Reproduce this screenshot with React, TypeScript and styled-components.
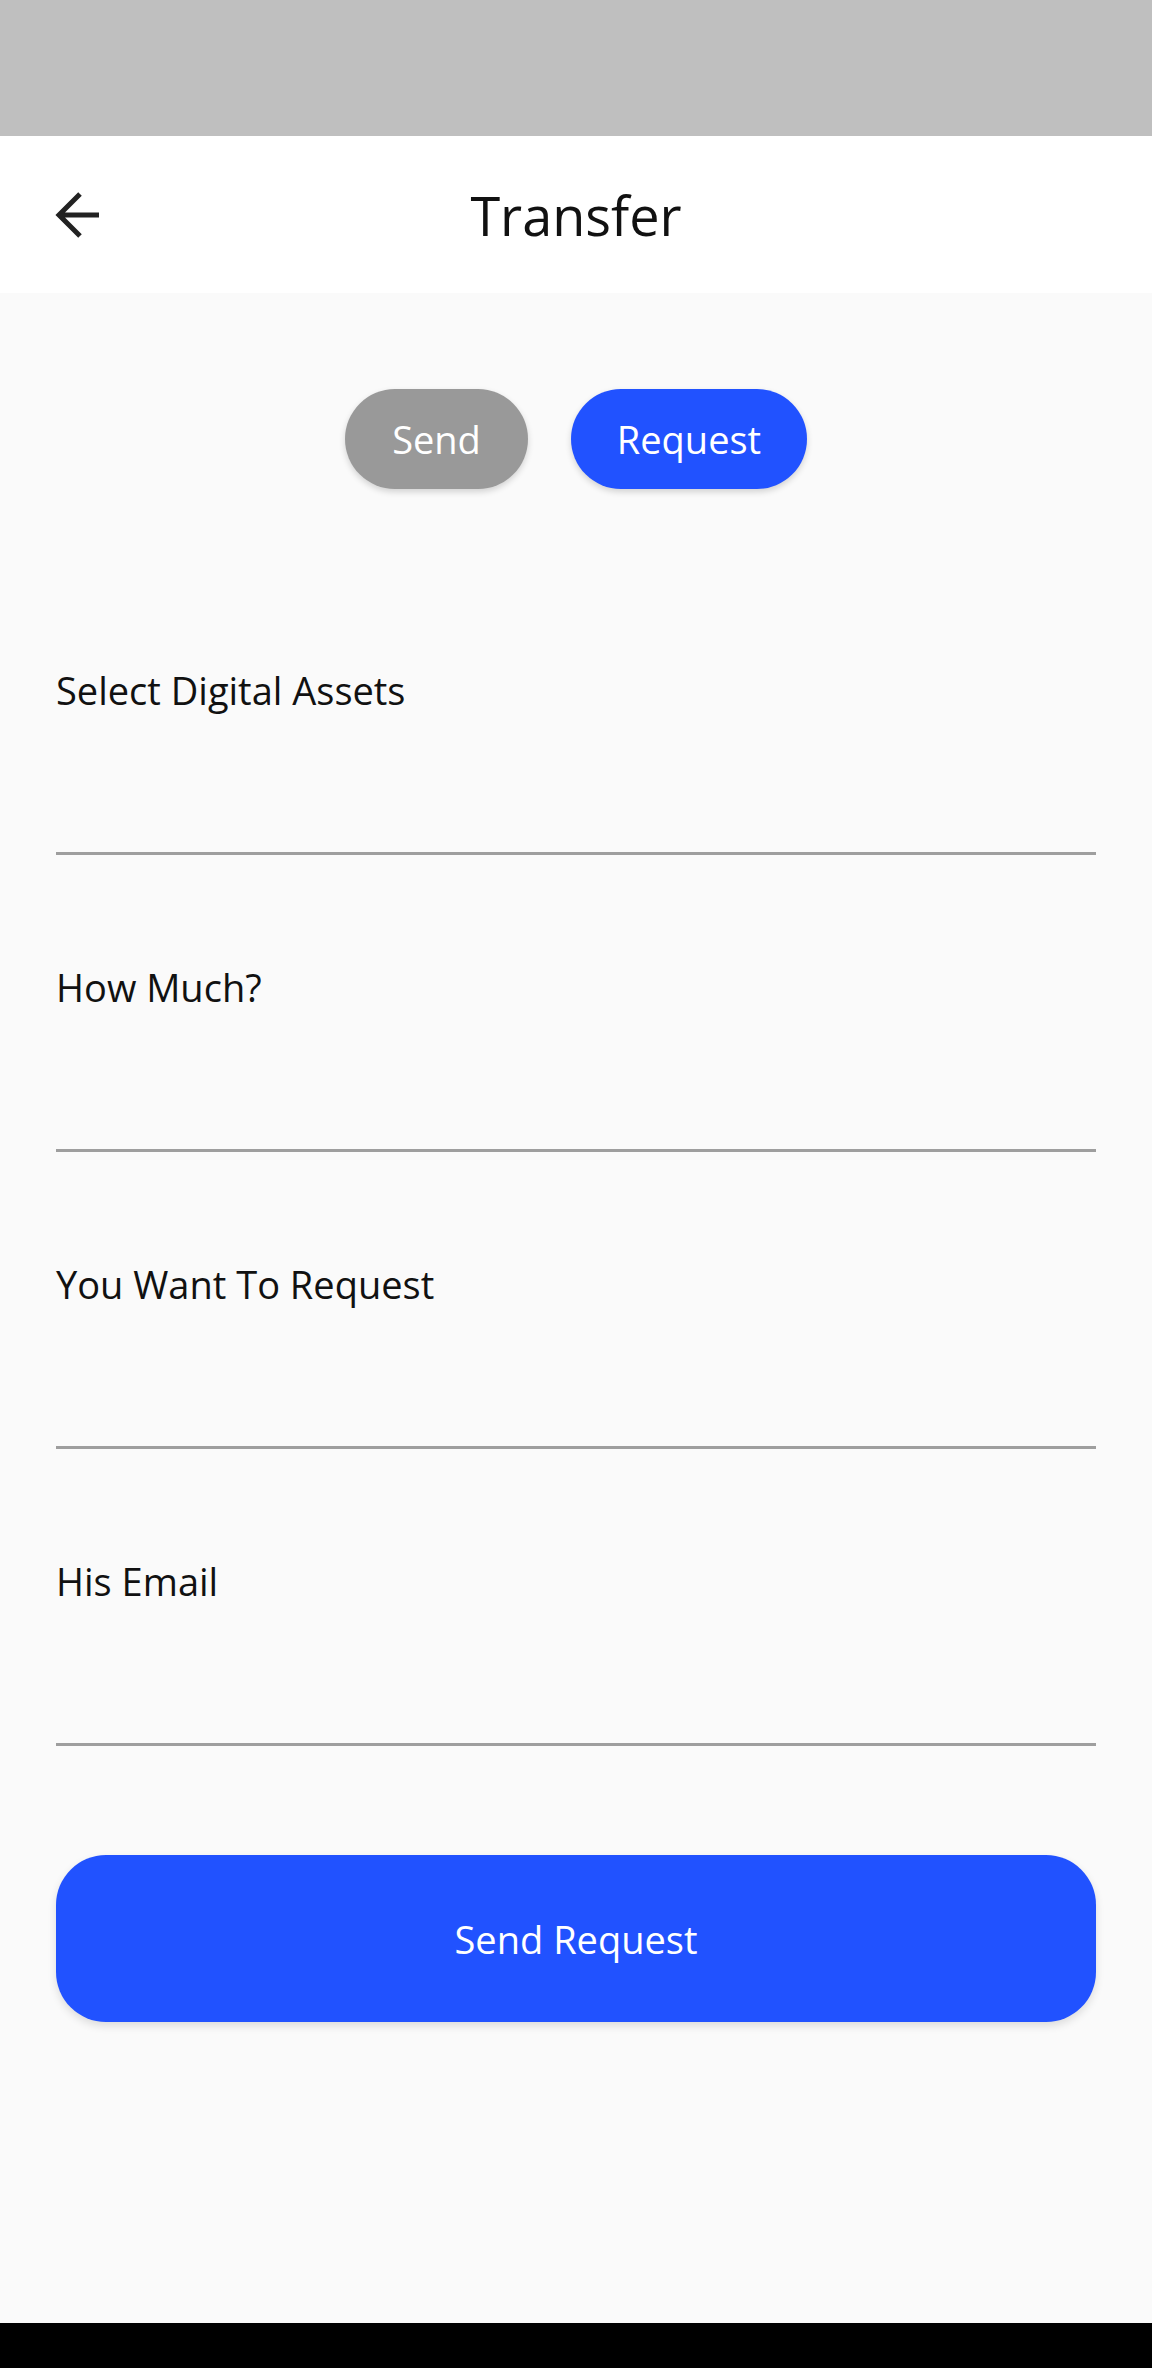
import React from "react";
import styled, { createGlobalStyle } from "styled-components";

const GlobalStyle = createGlobalStyle`
  html, body { margin: 0; padding: 0; }
  body { font-family: "Open Sans", "Noto Sans", sans-serif; background: #fafafa; }
  * { box-sizing: border-box; }
`;

const Page = styled.div`
  width: 1152px;
  min-height: 2368px;
  display: flex;
  flex-direction: column;
  background: #fafafa;
`;

const StatusBar = styled.div`
  height: 136px;
  background: #bfbfbf;
  flex-shrink: 0;
`;

const Header = styled.header`
  height: 157px;
  background: #ffffff;
  display: flex;
  align-items: center;
  position: relative;
  flex-shrink: 0;
`;

const BackButton = styled.button`
  position: absolute;
  left: 53px;
  top: 50%;
  transform: translateY(-50%);
  width: 48px;
  height: 48px;
  padding: 0;
  border: none;
  background: transparent;
  display: flex;
  align-items: center;
  justify-content: center;
`;

const Title = styled.h1`
  flex: 1;
  margin: 0;
  text-align: center;
  font-weight: 400;
  font-size: 54px;
  line-height: 60px;
  color: #111111;
`;

const Content = styled.main`
  flex: 1;
  display: flex;
  flex-direction: column;
  padding: 96px 56px 0 56px;
`;

const ToggleRow = styled.div`
  display: flex;
  justify-content: center;
  gap: 43px;
  margin-bottom: 175px;
`;

const ToggleButton = styled.button<{ $active?: boolean }>`
  height: 100px;
  width: ${(p) => (p.$active ? 236 : 183)}px;
  padding: 0;
  border: none;
  border-radius: 50px;
  background: ${(p) => (p.$active ? "#2152ff" : "#999999")};
  color: #ffffff;
  font-family: "Open Sans", "Noto Sans", sans-serif;
  font-size: 38px;
  font-weight: 400;
  box-shadow: 0 3px 6px rgba(0, 0, 0, 0.16);
`;

const Field = styled.div`
  display: flex;
  flex-direction: column;
  margin-bottom: 106px;
`;

const Label = styled.label`
  font-size: 38px;
  line-height: 52px;
  color: #111111;
`;

const Input = styled.input`
  height: 139px;
  border: none;
  border-bottom: 3px solid #9e9e9e;
  background: transparent;
  font-family: "Open Sans", "Noto Sans", sans-serif;
  font-size: 38px;
  outline: none;
`;

const SubmitButton = styled.button`
  margin-top: 3px;
  height: 167px;
  width: 100%;
  border: none;
  border-radius: 50px;
  background: #2152ff;
  color: #ffffff;
  font-family: "Open Sans", "Noto Sans", sans-serif;
  font-size: 38px;
  box-shadow: 0 4px 8px rgba(0, 0, 0, 0.12);
`;

const NavBar = styled.div`
  height: 45px;
  background: #000000;
  flex-shrink: 0;
`;

const fields = ["Select Digital Assets", "How Much?", "You Want To Request", "His Email"];

export default function App() {
  return (
    <Page>
      <GlobalStyle />
      <StatusBar />
      <Header>
        <BackButton aria-label="Back">
          <svg width="48" height="46" viewBox="0 0 48 46" fill="none">
            <path
              d="M46 23 H6 M27 2 L6 23 L27 44"
              stroke="#222222"
              strokeWidth="5"
              strokeLinecap="butt"
              strokeLinejoin="miter"
            />
          </svg>
        </BackButton>
        <Title>Transfer</Title>
      </Header>
      <Content>
        <ToggleRow>
          <ToggleButton>Send</ToggleButton>
          <ToggleButton $active>Request</ToggleButton>
        </ToggleRow>
        {fields.map((f) => (
          <Field key={f}>
            <Label>{f}</Label>
            <Input aria-label={f} />
          </Field>
        ))}
        <SubmitButton>Send Request</SubmitButton>
      </Content>
      <NavBar />
    </Page>
  );
}
